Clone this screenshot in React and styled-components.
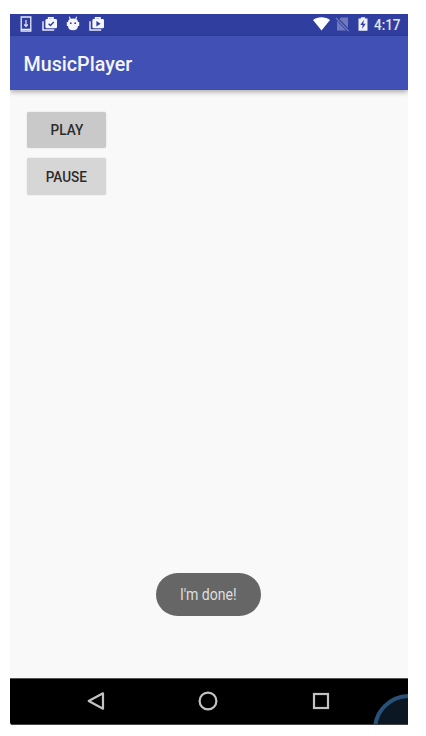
import React from "react";
import styled, { createGlobalStyle } from "styled-components";

const GlobalStyle = createGlobalStyle`
  * { box-sizing: border-box; }
  body { margin: 0; background: #fff; font-family: Roboto, sans-serif; overflow: hidden; }
`;

const Page = styled.div`
  width: 426px;
  height: 736px;
  padding: 13.5px 18.5px 11.5px 9.5px;
  background: #fff;
`;

const Phone = styled.main`
  height: 711px;
  display: flex;
  flex-direction: column;
  overflow: hidden;
  background: #f9f9f9;
  border-bottom-left-radius: 3px;
`;

const StatusBar = styled.div`
  flex: 0 0 22.5px;
  display: flex;
  justify-content: space-between;
  padding: 2.5px 6.5px 0 10px;
  background: #303f9f;
`;

const IconGroup = styled.div`
  display: flex;
  align-items: flex-start;
  gap: ${({ $gap }) => $gap}px;
`;

const StatusIcon = styled.svg`
  display: block;
  height: 16px;
  width: ${({ $width }) => $width}px;
  overflow: visible;
  opacity: ${({ $dim }) => ($dim ? 0.3 : 1)};
`;

const Clock = styled.time`
  padding-top: 1px;
  font-size: 14px;
  font-weight: 500;
  line-height: 17px;
  width: 27px;
  white-space: nowrap;
  color: #e3e5f3;
  transform: scaleX(0.96);
  transform-origin: left;
`;

const AppBar = styled.header`
  flex: 0 0 54px;
  display: flex;
  align-items: center;
  padding: 3px 0 0 14px;
  background: #4150b5;
  box-shadow: 0 2px 5px rgba(0, 0, 0, 0.32);
  z-index: 1;
`;

const Title = styled.h1`
  margin: 0;
  font-size: 19.7px;
  font-weight: 500;
  line-height: 24px;
  color: #f4f5fb;
`;

const Content = styled.section`
  flex: 1;
  display: flex;
  flex-direction: column;
  align-items: flex-start;
  gap: 10px;
  padding: 21.5px 0 0 17.5px;
`;

const Button = styled.button`
  width: 79px;
  height: 36.5px;
  padding: 1px 0 0;
  border: 0;
  border-radius: 2px;
  background: ${({ $pressed }) => ($pressed ? "#c9c9c9" : "#d6d6d6")};
  box-shadow: 0 0 1.5px rgba(0, 0, 0, 0.18);
  font: 500 14px/18px Roboto, sans-serif;
  color: #2c2c2c;
`;

const ButtonLabel = styled.span`
  display: inline-block;
  transform: scaleX(0.97);
`;

const Toast = styled.div`
  align-self: center;
  display: flex;
  align-items: center;
  justify-content: center;
  width: 105px;
  height: 43px;
  margin: auto 0 62px -17.5px;
  border-radius: 22px;
  background: #666;
`;

const ToastText = styled.span`
  padding-top: 1px;
  font-size: 16px;
  line-height: 20px;
  white-space: nowrap;
  color: #dedede;
  transform: scaleX(0.88);
`;

const NavBar = styled.nav`
  flex: 0 0 46.5px;
  display: grid;
  grid-template-columns: 30px 112.5px 112.5px 112.5px 30.5px;
  align-items: center;
  justify-items: center;
  position: relative;
  overflow: hidden;
  background: #000;
  border-top: 1px solid #555;
  border-bottom: 1px solid #444;
`;

const NavIcon = styled.svg`
  width: 20px;
  height: 20px;
  grid-column: ${({ $column }) => $column};
  fill: none;
  stroke: #c2c2c2;
  stroke-width: 2.2;
`;

const Touch = styled.span`
  position: absolute;
  left: 363.5px;
  top: 15px;
  width: 72px;
  height: 72px;
  border: 4px solid #29527a;
  border-radius: 50%;
  background: #0b1722;
`;

function Bag({ kind }) {
  return (
    <StatusIcon $width={15} viewBox="0 0 15 16">
      <path d="M1 5.2v8.9h11.2" fill="none" stroke="#e7e9f5" strokeWidth="1.5" />
      <path d="M6.6 3.4V1.9h4.4v1.5" fill="none" stroke="#f5f6fc" strokeWidth="1.6" />
      <rect x="3.4" y="3" width="11.6" height="9.3" rx="1.4" fill="#f5f6fc" />
      {kind === "check" ? (
        <path d="m6.6 7.7 1.8 1.8 3.4-3.5" fill="none" stroke="#303f9f" strokeWidth="1.4" />
      ) : (
        <path d="m7.4 5 4.2 2.7-4.2 2.7Z" fill="#303f9f" />
      )}
    </StatusIcon>
  );
}

export default function App() {
  return (
    <>
      <GlobalStyle />
      <Page>
        <Phone>
          <StatusBar>
            <IconGroup $gap={10}>
              <StatusIcon $width={12} viewBox="0 0 12 16">
                <path d="M1.2 1h9.6v14H1.2Z" fill="none" stroke="#e7e9f5" strokeWidth="1.3" />
                <path d="M1.2 13.4h9.6M6 4v6M4.2 8.5 6 10.3l1.8-1.8" fill="none" stroke="#e7e9f5" strokeWidth="1.2" />
              </StatusIcon>
              <Bag kind="check" />
              <StatusIcon $width={12} viewBox="0 0 12 16">
                <path d="m2.3.8 1.3 3M9.7.8l-1.3 3" stroke="#f5f6fc" strokeWidth="1.1" />
                <path d="M1 6.5C1 3.6 3 2.6 6 2.6s5 1 5 3.9Z" fill="#f5f6fc" />
                <path d="M-.2 6h12.4v4H11c0 2.8-1.8 4.2-5 4.2S1 12.8 1 10H-.2Z" fill="#f5f6fc" />
                <circle cx="3.8" cy="7.2" r=".9" fill="#303f9f" />
                <circle cx="8.2" cy="7.2" r=".9" fill="#303f9f" />
              </StatusIcon>
              <Bag kind="play" />
            </IconGroup>
            <IconGroup $gap={7}>
              <StatusIcon $width={17} viewBox="0 0 17 16">
                <path d="M0 4C4.5.3 12.5.3 17 4L8.5 14.5Z" fill="#fff" />
              </StatusIcon>
              <StatusIcon $width={11} $dim viewBox="0 0 11 16">
                <path d="M4 1.5h7V12L2.5 3ZM0 5l9.2 9.5H0Z" fill="#fff" />
                <path d="m-1 2 12.5 13" stroke="#fff" strokeWidth="1.2" />
              </StatusIcon>
              <IconGroup $gap={6.5}>
                <StatusIcon $width={13} viewBox="-3.5 0 13 16">
                  <path d="M0 2.4h2.4V1.2h4.2v1.2H9v12.4H0Z" fill="#eef0fa" />
                  <path d="M5.4 3.8 1.8 9h2.4l-.7 4L7.2 7.8H4.8Z" fill="#303f9f" />
                </StatusIcon>
                <Clock>4:17</Clock>
              </IconGroup>
            </IconGroup>
          </StatusBar>
          <AppBar>
            <Title>MusicPlayer</Title>
          </AppBar>
          <Content>
            <Button $pressed><ButtonLabel>PLAY</ButtonLabel></Button>
            <Button><ButtonLabel>PAUSE</ButtonLabel></Button>
            <Toast role="status">
              <ToastText>I'm done!</ToastText>
            </Toast>
          </Content>
          <NavBar>
            <NavIcon $column={2} viewBox="0 0 20 20">
              <path d="M17 2.3v15.4L2.7 10Z" strokeLinejoin="round" />
            </NavIcon>
            <NavIcon $column={3} viewBox="0 0 20 20">
              <circle cx="10" cy="10" r="8.4" />
            </NavIcon>
            <NavIcon $column={4} viewBox="0 0 20 20">
              <rect x="3" y="3" width="14" height="14" />
            </NavIcon>
            <Touch />
          </NavBar>
        </Phone>
      </Page>
    </>
  );
}
